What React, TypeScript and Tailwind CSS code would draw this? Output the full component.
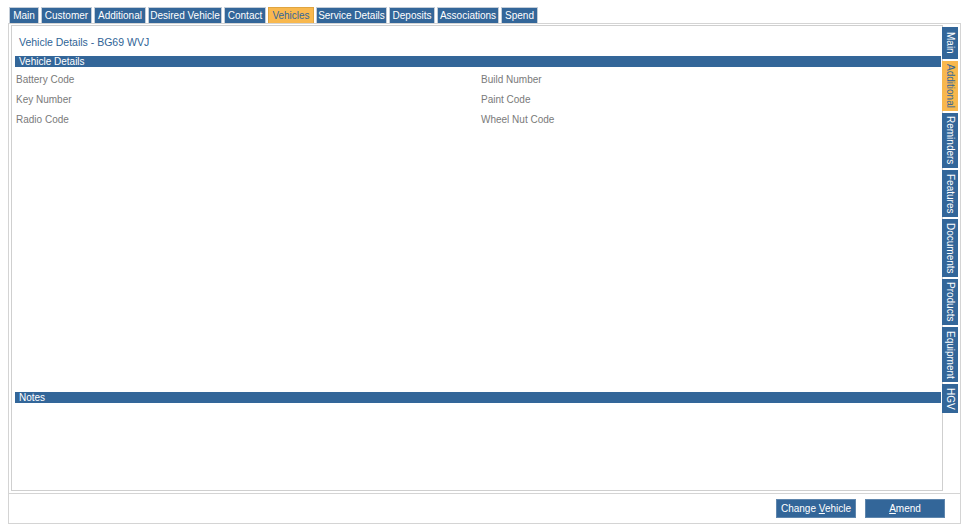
import React from "react";

const topTabs = [
  { label: "Main", w: "w-[30px]" },
  { label: "Customer", w: "w-[51px]" },
  { label: "Additional", w: "w-[52px]" },
  { label: "Desired Vehicle", w: "w-[74px]" },
  { label: "Contact", w: "w-[42px]" },
  { label: "Vehicles", w: "w-[46px]", active: true },
  { label: "Service Details", w: "w-[71px]" },
  { label: "Deposits", w: "w-[46px]" },
  { label: "Associations", w: "w-[62px]" },
  { label: "Spend", w: "w-[37px]" },
];

const sideTabs = [
  { label: "Main", h: "h-[32px]" },
  { label: "Additional", h: "h-[50px]", active: true },
  { label: "Reminders", h: "h-[55px]" },
  { label: "Features", h: "h-[47px]" },
  { label: "Documents", h: "h-[58px]" },
  { label: "Products", h: "h-[46px]" },
  { label: "Equipment", h: "h-[55px]" },
  { label: "HGV", h: "h-[29px]" },
];

const leftFields = ["Battery Code", "Key Number", "Radio Code"];
const rightFields = ["Build Number", "Paint Code", "Wheel Nut Code"];

function SectionBar({ title }: { title: string }) {
  return (
    <div className="h-[11px] bg-[#336699] pl-[4px] text-[10px] leading-[11px] text-white">
      {title}
    </div>
  );
}

export default function App() {
  return (
    <div className="relative h-[526px] w-[963px] overflow-hidden bg-white font-['Liberation_Sans',Arial,sans-serif]">
      {/* Top tabs */}
      <div className="flex h-[23px] gap-[2px] pl-[9px] pt-[7px]">
        {topTabs.map((t) => (
          <div
            key={t.label}
            className={`${t.w} flex h-[16px] items-center justify-center border-x border-t text-[10px] ${
              t.active
                ? "border-[#e0a540] bg-[#f8b84e] text-[#336699]"
                : "border-[#c3cdd8] bg-[#336699] text-white"
            }`}
          >
            {t.label}
          </div>
        ))}
      </div>

      {/* Outer frame */}
      <div className="ml-[8px] flex h-[501px] w-[953px] flex-col border border-[#d4d4d4]">
        <div className="flex pl-[2px] pt-[1px]">
          {/* Inner panel */}
          <div className="flex h-[466px] w-[932px] flex-col border border-[#cfcfcf] pl-[3px] pr-[1px]">
            <div className="pl-[4px] pt-[10px] text-[10.5px] leading-[12px] text-[#2f6496]">
              Vehicle Details - BG69 WVJ
            </div>
            <div className="mt-[8px]">
              <SectionBar title="Vehicle Details" />
            </div>
            <div className="grid flex-1 grid-cols-[466px_1fr] content-start pt-[3px] text-[10px] text-[#7a7a7a]">
              <div className="flex flex-col pl-[1px]">
                {leftFields.map((f) => (
                  <div key={f} className="h-[20px] leading-[20px]">
                    {f}
                  </div>
                ))}
              </div>
              <div className="flex flex-col">
                {rightFields.map((f) => (
                  <div key={f} className="h-[20px] leading-[20px]">
                    {f}
                  </div>
                ))}
              </div>
            </div>
            <div className="h-[98px]">
              <SectionBar title="Notes" />
            </div>
          </div>

          {/* Side tabs */}
          <div className="-ml-[1px] flex flex-col gap-[2px] pt-[2px]">
            {sideTabs.map((t) => (
              <div
                key={t.label}
                className={`${t.h} flex w-[16px] items-center justify-center text-[10px] [writing-mode:vertical-rl] ${
                  t.active ? "bg-[#f8b84e] text-[#336699]" : "bg-[#336699] text-white"
                }`}
              >
                {t.label}
              </div>
            ))}
          </div>
        </div>

        {/* Footer */}
        <div className="mt-[2px] flex flex-1 items-center justify-end gap-[9px] border-t border-[#d4d4d4] pr-[15px]">
          <button className="h-[19px] w-[80px] border border-[#5f86ad] bg-[#336699] text-[10px] text-white">
            Change <span className="underline">V</span>ehicle
          </button>
          <button className="h-[19px] w-[80px] border border-[#5f86ad] bg-[#336699] text-[10px] text-white">
            <span className="underline">A</span>mend
          </button>
        </div>
      </div>
    </div>
  );
}
